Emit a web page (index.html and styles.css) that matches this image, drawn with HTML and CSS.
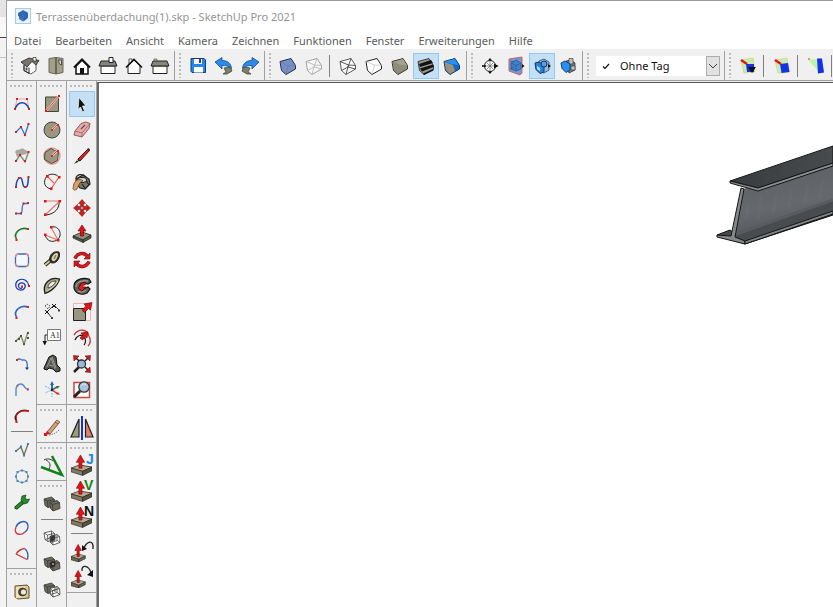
FILE: index.html
```html
<!DOCTYPE html>
<html lang="de">
<head>
  <meta charset="UTF-8" />
  <meta name="viewport" content="width=device-width, initial-scale=1.0"/>
  <title>Terrassenüberdachung(1).skp - SketchUp Pro 2021</title>
  <link rel="stylesheet" href="styles.css">
</head>
<body>

<!-- Shared shapes -->
<svg class="shapes" aria-hidden="true">
  <symbol id="cube" viewBox="0 0 20 20">
    <path d="M2 5.500 13 2.500 17.500 9.500V13L8 18.500 3.500 14.500Z"/>
  </symbol>
  <symbol id="slab" viewBox="0 0 20 20">
    <path d="M0 12.500 8 9.500 20 11.500 11 15.500Z" fill="#b8a98a" stroke="#222" stroke-width=".7"/>
    <path d="M0 12.500 11 15.500V19.500L0 16Z" fill="#857a60" stroke="#222" stroke-width=".6"/>
    <path d="M11 15.500 20 11.500V15L11 19.500Z" fill="#57513f" stroke="#222" stroke-width=".6"/>
    <path d="M7.500 12.500V7H5L9 0 13 7H10.500V12.500Z" fill="#e01418" stroke="#600" stroke-width=".5"/>
  </symbol>
  <symbol id="small-slab" viewBox="0 0 20 20">
    <path d="M0 15 6 12.500 13 14.500 7 17.500Z" fill="#b1a78c" stroke="#222" stroke-width=".5"/>
    <path d="M0 15 7 17.500V20L0 18ZM7 17.500 13 14.500V17L7 20Z" fill="#6b6453" stroke="#222" stroke-width=".5"/>
    <path d="M5.500 15V9.500H3.500L6.500 4 9.500 9.500H7.500V15Z" fill="#e01418" stroke="#600" stroke-width=".5"/>
  </symbol>
  <symbol id="back-box" viewBox="0 0 20 20">
    <path d="M2 5 9.500 3 12.500 5.500 13 11.500 6 13.500 3 11.500Z"/>
    <path d="M2 5 5.500 7 12.500 5.500M5.500 7 6 13.500" fill="none"/>
  </symbol>
  <symbol id="front-box" viewBox="0 0 20 20">
    <path d="M8 8.500 15 6.500 17.500 8.500 18 14.500 11 17 8.500 14.500Z"/>
    <path d="M8 8.500 10.500 10.500 17.500 8.500M10.500 10.500 11 17" fill="none"/>
  </symbol>
</svg>

<div class="desktop">
  <div class="behind"><span></span><span></span><span></span></div>

  <div class="window">
    <header class="titlebar">
      <svg class="logo" viewBox="0 0 16 16"><rect x=".5" y=".5" width="15" height="15" fill="#e9f3fc" stroke="#a9cbea"/><path d="M3 5 8 2l5 2.500V10L8.500 13.500 7 13l-3-2V8.500L3 8Z" fill="#3f78c4"/><path d="M3.500 6 8 3.800l4 2.200v3.500L9 12M4 8l4-2 2 1.200V9.500L8 11M5 9.800 8 8.300" fill="none" stroke="#1b4c93" stroke-width=".8"/></svg>
      <h1>Terrassenüberdachung(1).skp - SketchUp Pro 2021</h1>
    </header>

    <nav class="menu">
      <button>Datei</button>
      <button>Bearbeiten</button>
      <button>Ansicht</button>
      <button>Kamera</button>
      <button>Zeichnen</button>
      <button>Funktionen</button>
      <button>Fenster</button>
      <button>Erweiterungen</button>
      <button>Hilfe</button>
    </nav>

    <div class="toolbar">
      <!-- Ansichten -->
      <div class="group">
        <button class="tool" aria-label="Iso"><svg viewBox="0 0 20 20"><path d="M4 9v5.500l7 3.500 5-3.500V8l-3-3Z" fill="#fff" stroke="#333" stroke-width=".8"/><path d="M1 6 9 2l10 2.500-3 4.500-4-3.500-5 5.500Z" fill="#77756b" stroke="#222" stroke-width=".8"/><path d="M4 9.500v5l5 3v-6" fill="none" stroke="#222"/><path d="M5.500 11.500h2v3h-2Z" fill="#555"/><path d="M13 1.500h3v4l-3-1Z" fill="#fff" stroke="#222" stroke-width=".7"/></svg></button>
        <button class="tool" aria-label="Oben"><svg viewBox="0 0 20 20"><path d="M3 2.500 10 1.500v16.500l-7-1.500ZM10 1.500l7 1v14L10 18Z" fill="#a3a087" stroke="#6b695b"/><path d="M10 2v16" stroke="#5b594b"/><path d="M12.500 4h3v5l-2-1Z" fill="#ddd" stroke="#333" stroke-width=".8"/></svg></button>
        <button class="tool" aria-label="Vorne"><svg viewBox="0 0 20 20"><path d="m4 10 6-6 6 6v8H4Z" fill="#fff" stroke="#111" stroke-width="1.500"/><path d="m2 11.500 8-8 8 8" fill="none" stroke="#111" stroke-width="2"/><path d="M8 12h4v6H8Z" fill="#111"/></svg></button>
        <button class="tool" aria-label="Rechts"><svg viewBox="0 0 20 20"><path d="M3 10h14v7.500H3Z" fill="#fff" stroke="#222"/><path d="M3 5h14l2 5H1Z" fill="#88857b" stroke="#222"/><path d="M11 1.500h4v5h-4Z" fill="#fff" stroke="#222"/></svg></button>
        <button class="tool" aria-label="Hinten"><svg viewBox="0 0 20 20"><path d="M5 9V3h3v3" fill="#fff" stroke="#555"/><path d="m4 10 6-6 6 6v7.500H4Z" fill="#fff" stroke="#222"/><path d="m2 11.500 8-8 8 8" fill="none" stroke="#111" stroke-width="1.600"/></svg></button>
        <button class="tool" aria-label="Links"><svg viewBox="0 0 20 20"><path d="M3 10h14v7.500H3Z" fill="#fff" stroke="#222"/><path d="M3 5h14l2 5H1Z" fill="#88857b" stroke="#222"/><path d="M4 3h3v2H4Z" fill="#bbb" stroke="#444" stroke-width=".6"/></svg></button>
      </div>

      <!-- Datei -->
      <div class="group">
        <button class="tool" aria-label="Speichern"><svg viewBox="0 0 20 20"><path d="M3 2.500h13l1.500 1.500v12.500H4L3 15.500Z" fill="#2387ec" stroke="#123c73"/><path d="M6 3h8v5H6Z" fill="#f4f4f4"/><path d="M11 3h2v4h-2Z" fill="#35485f"/><path d="M6 11h9v5.500H6Z" fill="#fff"/></svg></button>
        <button class="tool" aria-label="Rückgängig"><svg viewBox="0 0 20 20"><path d="m10 12 6-1 2 4-5 3H9l3-2Z" fill="#7c806a" stroke="#333" stroke-width=".7"/><path d="m1 6 7-4.500v3c6 0 9 3 9.500 8-3-2.500-5.500-3-9.500-3V13Z" fill="#2b8bea" stroke="#174a86" stroke-width=".8"/></svg></button>
        <button class="tool" aria-label="Wiederholen"><svg viewBox="0 0 20 20"><path d="m10 12-6-1-2 4 5 3h4l-3-2Z" fill="#7c806a" stroke="#333" stroke-width=".7"/><path d="m19 6-7-4.500v3c-6 0-9 3-9.500 8 3-2.500 5.500-3 9.500-3V13Z" fill="#2b8bea" stroke="#174a86" stroke-width=".8"/></svg></button>
      </div>

      <!-- Stile -->
      <div class="group">
        <button class="tool" aria-label="Röntgen"><svg viewBox="0 0 20 20" fill="#7690c4" stroke="#25304a"><use href="#cube"/><path d="m3 6 7 4 7-1M10 10l-2 8" fill="none" stroke="#6179aa" stroke-width=".7"/></svg></button>
        <button class="tool" aria-label="Hintere Kanten"><svg viewBox="0 0 20 20" fill="#f7f7f7" stroke="#999" stroke-width=".9"><use href="#cube"/><path d="m2 5.500 8.500 3.500 7 .5M10.500 9 8 18.500M13 2.500l-3 8.500-6.500 3.500M10 11l7.500 2" fill="none" stroke="#bbb"/></svg></button>
        <span class="divider"></span>
        <button class="tool" aria-label="Drahtgitter"><svg viewBox="0 0 20 20" fill="#fafafa" stroke="#333" stroke-width=".8"><use href="#cube"/><path d="m2 5.500 8.500 3.500 7 .5M10.500 9 8 18.500M13 2.500l-3 8.500-6.500 3.500M10 11l7.500 2" fill="none"/></svg></button>
        <button class="tool" aria-label="Verdeckte Linie"><svg viewBox="0 0 20 20" fill="#fff" stroke="#222"><use href="#cube"/><path d="m2 5.500 8.500 3.500 7 .5M10.500 9 8 18.500" fill="none" stroke="#bbb" stroke-width=".7"/></svg></button>
        <button class="tool" aria-label="Schattiert"><svg viewBox="0 0 20 20" fill="#8e8c7b" stroke="#3a392f"><use href="#cube"/><path d="m3 6 10-3 4 6.500-6-.5Z" fill="#a3a190" stroke="none"/><path d="m11 9-3 9-4-4L2.500 6Z" fill="#8f8d79" stroke="none"/></svg></button>
        <button class="tool active" aria-label="Schattiert mit Texturen"><svg viewBox="0 0 20 20" fill="#99978a" stroke="#222" stroke-width=".8"><use href="#cube"/><path d="m3 8 12-4 2 3-13 4ZM4 12.500l13-4 .5 2.500L6 15.500ZM7 17.500l10.500-4.500v1.500L8 19Z" fill="#111" stroke="none"/></svg></button>
        <button class="tool" aria-label="Monochrom"><svg viewBox="0 0 20 20" fill="#1766c9" stroke="#17345d"><use href="#cube"/><path d="m2.500 5.500 10.500-2.500 3.500 6-7-1Z" fill="#2692f4" stroke="none"/><path d="m2.500 6 8.500 3 2 6-5 3-4-4Z" fill="#99937b" stroke="none"/></svg></button>
      </div>

      <!-- Schnitt -->
      <div class="group">
        <button class="tool" aria-label="Schnittebene"><svg viewBox="0 0 20 20"><circle cx="10" cy="10" r="5.500" fill="#fff" stroke="#222"/><path d="M2 10h16M10 4.500v11M7 7l6 6M13 7l-6 6" stroke="#666" stroke-width=".7"/><path d="M10 2 8 4.500h4ZM18.500 10 14 7.500v5ZM10 18l-2-2.500h4ZM2 9.300h4v1.400H2Z" fill="#111"/></svg></button>
        <button class="tool" aria-label="Schnittebenen anzeigen"><svg viewBox="0 0 20 20"><path d="m3 3 13-2v16l-2 2L3 15Z" fill="#6a9cda" stroke="#d5605f"/><path d="m5 7 5-3 5 3v6l-5 2-5-2Z" fill="#3f82ca" stroke="#2a5792" stroke-width=".8"/><path d="m5 7 5 2.500L15 7M10 9.500V15M4 5l4 1M4 13l4-2" fill="none" stroke="#2a5792" stroke-width=".7"/><path d="m16 8 2.500 2L16 12Z" fill="#111"/></svg></button>
        <button class="tool active" aria-label="Schnitte anzeigen"><svg viewBox="0 0 20 20"><path d="m7 5 5-2 5 3v8l-5 3-5-3Z" fill="#94b9df" stroke="#24466f" stroke-width=".8"/><path d="m3 7 4-1 5 3v7l-4 1.500-4-4Z" fill="#2683e0" stroke="#17345d"/><circle cx="12" cy="8" r="3" fill="#5a9fe3" stroke="#17345d"/><path d="m5 10 3 2v3l-3-2Z" fill="#c0daf0"/><path d="m16 8 3 2-3 2Z" fill="#111"/></svg></button>
        <button class="tool" aria-label="Schnittfüllung"><svg viewBox="0 0 20 20"><path d="m8 5 5-1 4 3v7l-6 3Z" fill="#777872" stroke="#333" stroke-width=".8"/><path d="M11 2.500h4V8h-4ZM13 10h4v4h-4Z" fill="#c1c2bd" stroke="#444" stroke-width=".7"/><path d="m3 7 4-2 5 3v6l-4 2.500-4-4Z" fill="#2490ef" stroke="#174379"/></svg></button>
      </div>

      <!-- Tags -->
      <div class="group">
        <div class="tag-picker">
          <svg class="check" viewBox="0 0 10 10"><path d="m2 5.500 2 2 4-4.500" fill="none" stroke="#111" stroke-width="1.200"/></svg>
          <select aria-label="Tag"><option>Ohne Tag</option></select>
          <span class="arrow"><svg viewBox="0 0 10 10"><path d="m1 3 4 4 4-4" fill="none" stroke="#444"/></svg></span>
        </div>
      </div>

      <!-- Texturen -->
      <div class="group last">
        <button class="tool" aria-label="Textur auswählen"><svg viewBox="0 0 20 20"><path d="M3 4 15 2l2 14-11 1Z" fill="#c7eeb0" stroke="#d3d08e" stroke-width=".8"/><path d="M8 8h8v8H9Z" fill="#1332e4"/><path d="m3 4 6 4" stroke="#dd1b18" stroke-width="2.500"/><path d="M10 11h8l-4 6Z" fill="#111"/></svg></button>
        <span class="divider"></span>
        <button class="tool" aria-label="Textur ausrichten"><svg viewBox="0 0 20 20"><path d="M3 4 15 2l2 14-11 1Z" fill="#c7eeb0" stroke="#d3d08e" stroke-width=".8"/><path d="m8 8 8-1 1.500 9-8 1Z" fill="#1332e4"/><path d="m3 4 6 4" stroke="#dd1b18" stroke-width="2.500"/></svg></button>
        <span class="divider"></span>
        <button class="tool" aria-label="Textur skalieren"><svg viewBox="0 0 20 20"><path d="M2 3.500h10l2 14Z" fill="#bff3a9"/><path d="M11 2.500h5l2 14-6 1Z" fill="#1332e4"/><path d="M2 3h2" stroke="#d82" stroke-width="1.500"/></svg></button>
        <span class="divider"></span>
      </div>
    </div>

    <main class="workspace">
      <!-- Bézier -->
      <div class="palette">
        <div class="stack">
          <button class="tool" aria-label="Bézierkurve"><svg viewBox="0 0 20 20"><path d="M3 15 5 5h10l2 10" fill="none" stroke="#eea6a0"/><path d="M3 15C6 6.500 14 6.500 17 15" fill="none" stroke="#173fb0" stroke-width="1.500"/><path d="M4 4h2v2H4ZM14 4h2v2h-2ZM2 14h2v2H2ZM16 14h2v2h-2Z" fill="#d71d1d"/></svg></button>
          <button class="tool" aria-label="Polylinie"><svg viewBox="0 0 20 20"><path d="m4 12 5-5 4 8 3.500-11" fill="none" stroke="#426fc5" stroke-width="1.300"/><path d="M3 11h2v2H3ZM8 6h2v2H8ZM12 14h2v2h-2ZM15.500 3h2v2h-2Z" fill="#d71d1d"/></svg></button>
          <button class="tool" aria-label="Polylinie teilen"><svg viewBox="0 0 20 20"><path d="M4 8c-2-3 1-5 3-4 2-2 5-2 6 0 3 0 4 3 1 4l-4 1-5 2Z" fill="#aaa79f"/><path d="m4 15 4-6 5 7 3.500-10" fill="none" stroke="#8a8e78" stroke-width="1.500"/><path d="M3 14h2v2H3ZM7 8h2v2H7ZM12 14h2v2h-2ZM15.500 5h2v2h-2Z" fill="#c22"/></svg></button>
          <button class="tool" aria-label="Spline"><svg viewBox="0 0 20 20"><path d="M4 15c0-5 2-10 5-9 2 1 1 9 4 9 3 1 3-5 3.500-10" fill="none" stroke="#1e43bb" stroke-width="1.500"/><path d="M3 14h2v2H3ZM6 5h2v2H6ZM12 14h2v2h-2ZM15.500 4h2v2h-2Z" fill="#d71d1d"/></svg></button>
          <button class="tool" aria-label="Kubische Kurve"><svg viewBox="0 0 20 20"><path d="M4 15.500h5c2 0 0-9 3-10h4" fill="none" stroke="#3f70c4" stroke-width="1.300"/><path d="M3 14.500h2v2H3ZM8 14.500h2v2H8ZM10.500 4.500h2v2h-2ZM15 4h2v2h-2Z" fill="#c22"/></svg></button>
          <button class="tool" aria-label="Grüner Bogen"><svg viewBox="0 0 20 20"><path d="M4.500 15C1 9 8 2.500 16 5" fill="none" stroke="#237c2c" stroke-width="1.600"/><path d="M3.500 15h2v2h-2ZM15 4h2v2h-2Z" fill="#d71d1d"/></svg></button>
          <button class="tool" aria-label="Rundes Rechteck"><svg viewBox="0 0 20 20"><rect x="3.500" y="4" width="13" height="12.500" rx="3" fill="#f5f7fc" stroke="#3f68bd" stroke-width="1.300"/><path d="M3.500 7q0-3 3-3M13.500 4q3 0 3 3M16.500 13.500q0 3-3 3M6.500 16.500q-3 0-3-3" fill="none" stroke="#dc918a" stroke-width="1.300"/></svg></button>
          <button class="tool" aria-label="Spirale"><svg viewBox="0 0 20 20"><path d="M10 10.500c1.500 2-3 3-3.500 0C6 7 10 6 12 7.500c3 3 0 7-4 6.500-5-1-5.500-7-2-9.500 5-3 10 0 10.500 5" fill="none" stroke="#1838b6" stroke-width="1.200"/><path d="M9 9.500h2v2H9ZM16 9h2v2h-2Z" fill="#d71d1d"/></svg></button>
          <button class="tool" aria-label="Blauer Bogen"><svg viewBox="0 0 20 20"><path d="M4.500 15C1 9 8 2.500 16 5" fill="none" stroke="#3163c2" stroke-width="1.600"/><path d="M3.500 15h2v2h-2ZM15 4h2v2h-2Z" fill="#d71d1d"/></svg></button>
          <button class="tool" aria-label="Linienzug"><svg viewBox="0 0 20 20"><path d="m4 13 5-5 3 8 4-12" fill="none" stroke="#879071" stroke-width="1.500"/><path d="M3 12h2v2H3ZM8 7h2v2H8ZM11 15h2v2h-2ZM15 4h2v2h-2ZM15 9h2v2h-2ZM6 10h2v2H6Z" fill="#505b32"/></svg></button>
          <button class="tool" aria-label="Kurve nach rechts"><svg viewBox="0 0 20 20"><path d="M5 6c3-3 4 1 6 0 4-1 5 4 4 9" fill="none" stroke="#4270bd" stroke-width="1.300"/><path d="M4 5h2v2H4Z" fill="#d23"/><path d="M13 13.500h4L15 16Z" fill="#173fb0"/></svg></button>
          <button class="tool" aria-label="Bogen nach rechts"><svg viewBox="0 0 20 20"><path d="M4 16V10C4 3 10 3 12 6c1 2 2 3 4 3" fill="none" stroke="#5d88c9" stroke-width="1.400"/><path d="M15 8.500h2v2h-2ZM5 5h1.500v1.500H5Z" fill="#b64b65"/></svg></button>
          <button class="tool" aria-label="Roter Bogen"><svg viewBox="0 0 20 20"><path d="M4.500 15C1 9 8 2.500 16 5" fill="none" stroke="#501818" stroke-width="1.800"/><path d="M4.500 13C3 8 9 4 15 5" fill="none" stroke="#e22" stroke-width="1"/><path d="M3.500 15h2v2h-2ZM15 4h2v2h-2Z" fill="#e11"/></svg></button>
          <span class="rule"></span>
          <button class="tool" aria-label="Punkte bearbeiten"><svg viewBox="0 0 20 20"><path d="m4 11 5-4 3 8 4-11" fill="none" stroke="#68705a" stroke-width="1.300"/><path d="M3 10h2v2H3ZM8 5.500h2v2H8ZM11 14.500h2v2h-2ZM15 3h2v2h-2Z" fill="#3a7bbd"/></svg></button>
          <button class="tool" aria-label="Kreispunkte"><svg viewBox="0 0 20 20"><circle cx="10" cy="10.500" r="6" fill="none" stroke="#7b817f"/><path d="M9 3.500h2v2H9ZM9 15.500h2v2H9ZM3 9.500h2v2H3ZM15 9.500h2v2h-2ZM4.500 5h2v2h-2ZM13.500 5h2v2h-2ZM4.500 14h2v2h-2ZM13.500 14h2v2h-2Z" fill="#3c86c8"/></svg></button>
          <button class="tool" aria-label="Einstellungen"><svg viewBox="0 0 20 20"><path d="m4.500 15.500 7-6" stroke="#153f19" stroke-width="4" stroke-linecap="round"/><path d="m4.500 15.500 8-7" stroke="#248b2a" stroke-width="2.500" stroke-linecap="round"/><path d="m9 8 1-4 4-1-1 3 2 1.500 2.500-.5-2 4-4 1Z" fill="#248b2a" stroke="#153f19" stroke-width=".7"/></svg></button>
          <button class="tool" aria-label="Offene Kurve"><svg viewBox="0 0 20 20" fill="none" stroke-width="1.400"><path d="M4 9C1 17 9 18 13 14" stroke="#d83b3b"/><path d="M4 9c2-5 8-7 11-4 2 3 1 7-2 9" stroke="#315bb5"/></svg></button>
          <button class="tool" aria-label="Kurve schließen"><svg viewBox="0 0 20 20" fill="none" stroke-width="1.300"><path d="m4 10 11 5.500" stroke="#d33"/><path d="M15.500 15.500c1-5 0-9-3-11" stroke="#315bb5"/><path d="M12.500 4.500C9 5 6 7 4 10" stroke="#c33"/></svg></button>
        </div>
        <div class="stack open">
          <button class="tool" aria-label="Loch"><svg viewBox="0 0 20 20"><path d="m3 4 12-1 2 2v11l-11 1-3-2Z" fill="#dac88e" stroke="#5f5334"/><path d="m4 5 9-.5V15L4 16Z" fill="#f0e2b1"/><circle cx="10.500" cy="10" r="4" fill="#4c4a42" stroke="#222" stroke-width=".7"/><circle cx="11.500" cy="10" r="2.600" fill="#eee9d6"/></svg></button>
        </div>
      </div>

      <!-- Zeichnen und Konstruktion -->
      <div class="palette">
        <div class="stack">
          <button class="tool" aria-label="Rechteck"><svg viewBox="0 0 20 20"><path d="M3.500 3h13v14.500h-13Z" fill="#99977f" stroke="#45443a"/><path d="M4 17 17 2" stroke="#f2c0b7" stroke-width="2"/><path d="M4 17 17 2" stroke="#d33" stroke-width=".8"/><path d="M3 16h2v2H3ZM16 1h2v2h-2Z" fill="#e11"/></svg></button>
          <button class="tool" aria-label="Kreis"><svg viewBox="0 0 20 20"><circle cx="10" cy="10" r="8" fill="#99977f" stroke="#45443a"/><path d="m10 10 6-6" stroke="#f3c4bc" stroke-width="2"/><path d="m10 10 6-6" stroke="#c33" stroke-width=".8"/><path d="M9 9h2v2H9ZM15 4h2v2h-2Z" fill="#d22"/></svg></button>
          <button class="tool" aria-label="Polygon"><svg viewBox="0 0 20 20"><circle cx="10" cy="10" r="8" fill="none" stroke="#e99991" stroke-width="1.500"/><path d="m9 2.500 7.500 4-1 8-6 3-7-4 .5-7Z" fill="#99977f" stroke="#4d493f"/><path d="m10 10 6-6" stroke="#f3c4bc" stroke-width="2"/><path d="m10 10 6-6" stroke="#c33" stroke-width=".8"/><path d="M9 9h2v2H9ZM15 4h2v2h-2Z" fill="#d22"/></svg></button>
          <button class="tool" aria-label="Bogen"><svg viewBox="0 0 20 20"><path d="M5 4c4-3 9-2 12 1M5 4c-5 6-2 12 4 13" fill="none" stroke="#222"/><path d="m5 4 7 7M17 5 9 17" stroke="#dd6358" stroke-width="1.200"/><path d="M4 3h2.500v2.500H4ZM16 4h2.500v2.500H16ZM8 15.500h2.500V18H8Z" fill="#e11"/></svg></button>
          <button class="tool" aria-label="2-Punkt-Bogen"><svg viewBox="0 0 20 20"><path d="M17 3c1 7-4 13-13 14" fill="none" stroke="#222"/><path d="M3 3h15L3 17" fill="none" stroke="#dd7b70" stroke-width="1.200"/><path d="M2 2h2.500v2.500H2ZM16.500 2H19v2.500h-2.500ZM2 15.500h2.500V18H2Z" fill="#e11"/></svg></button>
          <button class="tool" aria-label="3-Punkt-Bogen"><svg viewBox="0 0 20 20"><path d="M9 3c9-2 12 9 6 13-5 3-10 1-12-5" fill="none" stroke="#222"/><path d="m9 3 7 13-13-5" fill="none" stroke="#dd7b70" stroke-width="1.200"/><path d="M8 2h2.500v2.500H8ZM15 15h2.500v2.500H15ZM2 9.500h2.500V12H2Z" fill="#e11"/></svg></button>
          <button class="tool" aria-label="Maßband"><svg viewBox="0 0 20 20"><path d="m3 15 6-5" stroke="#222" stroke-width="4"/><path d="m3 15 6-5" stroke="#d4ca83" stroke-width="2"/><path d="M8 7c1-4 5-6 9-5 2 5-2 11-6 11-3 0-4-3-3-6Z" fill="#333127" stroke="#222"/><path d="M10 7c2-4 5-5 6-3 0 4-3 8-5 7-1 0-2-2-1-4Z" fill="#ddd6ad"/><path d="m12 9 2-4" stroke="#77715a" stroke-width="1.200"/></svg></button>
          <button class="tool" aria-label="Winkelmesser"><svg viewBox="0 0 20 20"><path d="M3 17.500C0 8 8 0 17.500 3 17 7 11 15 3 17.500Z" fill="#aaa982" stroke="#222" stroke-width="1.300"/><path d="M6 12c0-4 3-7 8-7-1 3-4 6-8 7Z" fill="#f2f2ed" stroke="#333" stroke-width=".8"/><path d="M5 15c5-2 9-6 11-10" fill="none" stroke="#dddcb2"/></svg></button>
          <button class="tool" aria-label="Abmessung"><svg viewBox="0 0 20 20"><path d="m5 10 7-7 5 5M5 10l5 6" fill="none" stroke="#444"/><path d="m3 8 4 4M7 8l-4 4M10 2l4 4M14 2l-4 4" stroke="#111"/><path d="M16 7.500h2v2h-2ZM9 15h2v2H9Z" fill="#334b34"/><path d="m3 4 2-2 3 2-2 3Z" fill="none" stroke="#555" stroke-dasharray="1.500 1"/></svg></button>
          <button class="tool" aria-label="Text"><svg viewBox="0 0 20 20"><path d="M5.500 1.500h13v11h-13Z" fill="#fff" stroke="#777"/><text x="8" y="10" class="label">A1</text><path d="M5 7H3v7" fill="none" stroke="#222"/><path d="M.500 13H5l-2.200 4.500Z" fill="#111"/></svg></button>
          <button class="tool" aria-label="3D-Text"><svg viewBox="0 0 20 20"><path d="M2 14 7 3l4-2 3 2 1 8 3 3v3l-4 1-3-3-4-1-2 2-3-1Z" fill="#56564f" stroke="#111"/><path d="m5 13 4-9 4 11M7 11l4 1M10 3l4 11" fill="none" stroke="#aaa" stroke-width=".8"/></svg></button>
          <button class="tool" aria-label="Achsen"><svg viewBox="0 0 20 20"><path d="M10 10V3" stroke="#246bc0" stroke-width="2"/><path d="M8 5h4l-2-4Z" fill="#246bc0"/><path d="m10 10 5-3" stroke="#536c49" stroke-width="1.500"/><path d="m14 6 4 0-3 3Z" fill="#536c49"/><path d="m10 10 6 4" stroke="#d42b28" stroke-width="1.500"/><path d="m14 14 4 1-2-3Z" fill="#d42b28"/><path d="m3 6 7 4-7 3M10 10v7" fill="none" stroke="#7eaad5" stroke-dasharray="2 1"/><path d="M9 9h2v2H9Z" fill="#222"/></svg></button>
        </div>
        <div class="stack">
          <button class="tool" aria-label="Freihand"><svg viewBox="0 0 20 20"><path d="m5 14 9-11 3 2-9 11Z" fill="#d3a273" stroke="#5e4631" stroke-width=".8"/><path d="m13 4 2-2 3 2-2 2Z" fill="#e8a294" stroke="#5e4631" stroke-width=".7"/><path d="m3 17 2-4 3 3Z" fill="#d11"/><path d="M7 17c5-1 7-2 10-5" fill="none" stroke="#777" stroke-dasharray="1.500 1"/><path d="M2 15h3v3H2Z" fill="#e11"/></svg></button>
        </div>
        <div class="stack">
          <button class="tool" aria-label="Winkel"><svg class="large" viewBox="0 0 24 24"><path d="m12 2 10 19L1 13" fill="none" stroke="#158019" stroke-width="2.500"/><path d="M4 6c3-2 7-1 9 1M6 6c4 2 5 5 3 9" fill="none" stroke="#333"/></svg></button>
        </div>
        <div class="stack open">
          <button class="tool" aria-label="Äußere Schale"><svg viewBox="0 0 20 20" fill="#6b6b62" stroke="#383832" stroke-width=".8"><use href="#back-box"/><use href="#front-box"/></svg></button>
          <span class="rule"></span>
          <button class="tool" aria-label="Schnittmenge"><svg viewBox="0 0 20 20" fill="#fff" stroke="#444" stroke-width=".8"><use href="#back-box"/><use href="#front-box"/><path d="m8 8.500 5-1.500v5l-4.500 2Z" fill="#333"/><path d="m3 11.500 7-2 3 2M9.500 3v6M8.500 14.500l7-2 2.500 2M15 6.500v6" fill="none"/></svg></button>
          <button class="tool" aria-label="Vereinigen"><svg viewBox="0 0 20 20" fill="#6b6b62" stroke="#383832" stroke-width=".8"><use href="#back-box"/><use href="#front-box"/><path d="m8 8.500 5-1.500v5l-4.500 2Z" fill="#292925"/><path d="M10 9h2v2h-2Z" fill="#888" stroke="none"/></svg></button>
          <button class="tool" aria-label="Abziehen"><svg viewBox="0 0 20 20" fill="#6b6b62" stroke="#383832" stroke-width=".8"><use href="#back-box"/><use href="#front-box" fill="#fff"/><path d="m8.500 14.500 6.500-2 3 2M15 6.500v6M8 11.500l5-1.500M13 7v5" fill="none"/></svg></button>
        </div>
      </div>

      <!-- Bearbeiten -->
      <div class="palette">
        <div class="stack">
          <button class="tool active" aria-label="Auswählen"><svg viewBox="0 0 20 20"><path d="m7 3.500 7 8.500h-3.500l2 5-2 1-2-5L6 15.500Z" fill="#111" stroke="#fff" stroke-width=".7"/></svg></button>
          <button class="tool" aria-label="Radiergummi"><svg viewBox="0 0 20 20"><path d="M9 3.500 14 2l4 1.500-1 5L10 17l-8-2 1-4Z" fill="#eca7a8" stroke="#69464a" stroke-width=".8"/><path d="m3 11 7 2 8-9.500M10 13v4" fill="none" stroke="#9d6065" stroke-width=".8"/><path d="m9 9 4-4" stroke="#555" stroke-width="1.300"/></svg></button>
          <button class="tool" aria-label="Linie"><svg viewBox="0 0 20 20"><path d="M6 13 16 3l1.500 1.500L8 15Z" fill="#d81f24" stroke="#5b1517"/><path d="m15 3 2-1 1 2-1 1.500Z" fill="#333"/><path d="m2 18 4-5 2 2Z" fill="#222"/><path d="m5 14 2 2" stroke="#c7b88c"/></svg></button>
          <button class="tool" aria-label="Farbeimer"><svg viewBox="0 0 20 20"><path d="m4 7 7-4 6 4 1 5-5 5-5-1-4-5Z" fill="#77756a" stroke="#222" stroke-width="1.200"/><path d="M4 7c0-5 7-6 10-2M13 7l4 6M10 12l3 4" fill="none" stroke="#222" stroke-width="1.200"/><ellipse cx="10" cy="8" rx="4.500" ry="2.500" fill="#d4d1c1" stroke="#222"/><path d="M3 10c2-3 6-3 8-1-4 1-4 4-6 8-2 2-4 1-4-1 1-2 0-4 2-6Z" fill="#d9a067" stroke="#574532" stroke-width=".8"/></svg></button>
          <button class="tool" aria-label="Verschieben"><svg viewBox="0 0 20 20" fill="#d9171b" stroke="#6e1011" stroke-width=".5"><path d="m10 1.500 3.500 4h-2v3h-3v-3h-2ZM10 18.500l3.500-4h-2v-3h-3v3h-2ZM1.500 10l4-3.500v2h3v3h-3v2ZM18.500 10l-4-3.500v2h-3v3h3v2Z"/><path d="M9 9h2v2H9Z" fill="#fff"/></svg></button>
          <button class="tool" aria-label="Drücken/Ziehen"><svg viewBox="0 0 20 20"><path d="m1 12 9-4 9 3-8 5Z" fill="#928e77" stroke="#222" stroke-width=".8"/><path d="m1 12 10 4v2.500L1 14ZM11 16l8-5v3l-8 4.500Z" fill="#5d5a4b" stroke="#222" stroke-width=".7"/><path d="M8.500 12V7H6l4-6 4 6h-2.500v5Z" fill="#e01418" stroke="#600" stroke-width=".6"/></svg></button>
          <button class="tool" aria-label="Drehen"><svg viewBox="0 0 20 20" fill="none"><path d="M3 8.500C5 3 12 2 15 6M17 11.500C15 17 8 18 5 14" stroke="#611" stroke-width="3.400"/><path d="M3 8.500C5 3 12 2 15 6M17 11.500C15 17 8 18 5 14" stroke="#e2171b" stroke-width="2.400"/><path d="m18 3 0 6h-6ZM2 17v-6h6Z" fill="#e2171b" stroke="#611" stroke-width=".6"/></svg></button>
          <button class="tool" aria-label="Folge mir"><svg viewBox="0 0 20 20"><path d="M2 12C1 5 8 1 17 3l2 3-3 2-4-1c-5 0-5 5-1 6l5-2 2 2-3 4c-6 3-12 0-13-5Z" fill="#62605a" stroke="#111" stroke-width="1.200"/><path d="M4 11c0-5 6-7 12-6M6 15c3 2 6 1 8-1" fill="none" stroke="#b4ae9f"/><path d="M8 10c0-3 3-4 6-3L13 9c-2 0-3 1-2 2h3l-4 4-4-3Z" fill="#e11b1e" stroke="#500" stroke-width=".7"/></svg></button>
          <button class="tool" aria-label="Skalieren"><svg viewBox="0 0 20 20"><path d="M1.500 1.500h17v17h-17Z" fill="none" stroke="#edb5ac"/><path d="M1.500 6.500h12v12h-12Z" fill="#99977f" stroke="#222"/><path d="m10 8 4-4-2-2 8-1.500L18.500 8l-2-1.500-4 4Z" fill="#e01418" stroke="#500" stroke-width=".6"/></svg></button>
          <button class="tool" aria-label="Versatz"><svg viewBox="0 0 20 20" fill="none" stroke-width="1.300"><path d="M2 7C7 0 15 1 17 8c2 4 1 8-1 10" stroke="#c33"/><path d="M3 12c2-5 7-6 9-3 2 2 2 6 0 8" stroke="#222"/><path d="m8 10 3-3-2-2 7-1-1 6-1.500-1-3 3Z" fill="#e01418" stroke="#500" stroke-width=".6"/></svg></button>
          <button class="tool" aria-label="Zoom Grenzen"><svg viewBox="0 0 20 20"><path d="m7 13-5 5" stroke="#222" stroke-width="2.500"/><circle cx="9.500" cy="10" r="4" fill="#9bbadb" stroke="#333" stroke-width="1.300"/><path d="m4 4 3 3M16 4l-3 3M16 16l-3-3" stroke="#222" stroke-width="1.500"/><path d="M1.500 1.500 7 2 2 7ZM18.500 1.500 13 2l5 5ZM18.500 18.500 13 18l5-5Z" fill="#d8191c" stroke="#500" stroke-width=".5"/></svg></button>
          <button class="tool" aria-label="Zoomfenster"><svg viewBox="0 0 20 20"><path d="M2 2.500h15.500v15H2Z" fill="#fff" stroke="#cc4942" stroke-width="1.500"/><path d="m8 11-6 6" stroke="#222" stroke-width="3"/><circle cx="12" cy="7" r="5.200" fill="#a9c4df" stroke="#333" stroke-width="1.300"/><path d="M9 6c1-2 3-3 5-1" fill="none" stroke="#eaf4fc"/></svg></button>
        </div>
        <div class="stack">
          <button class="tool" aria-label="Spiegeln"><svg class="large" viewBox="0 0 24 24"><path d="M9 3v18H1Z" fill="#9b9d78" stroke="#222" stroke-width="1.200"/><path d="M15.500 3v18H23Z" fill="#df806c" stroke="#222" stroke-width="1.200"/><path d="M12 0v24" stroke="#1531df" stroke-width="2"/></svg></button>
        </div>
        <div class="stack">
          <button class="tool" aria-label="Joint Push Pull"><svg class="large" viewBox="0 0 24 24"><use href="#slab" x="1" y="1" width="21" height="21"/><text x="16" y="10" class="letter blue">J</text></svg></button>
          <button class="tool" aria-label="Vector Push Pull"><svg class="large" viewBox="0 0 24 24"><use href="#slab" x="1" y="1" width="21" height="21"/><text x="14" y="10" class="letter green">V</text></svg></button>
          <button class="tool" aria-label="Normal Push Pull"><svg class="large" viewBox="0 0 24 24"><use href="#slab" x="1" y="1" width="21" height="21"/><text x="14" y="10" class="letter">N</text></svg></button>
          <span class="rule"></span>
          <button class="tool" aria-label="Zurück"><svg class="large" viewBox="0 0 24 24"><use href="#small-slab" x="1" y="0" width="22" height="22"/><path d="M23 9c1-10-6-8-9-1" fill="none" stroke="#222" stroke-width="1.300"/><path d="m12 5 0 6 5-2Z" fill="#111"/></svg></button>
          <button class="tool" aria-label="Wiederholung"><svg class="large" viewBox="0 0 24 24"><use href="#small-slab" x="1" y="0" width="22" height="22"/><path d="M12 5c-1-7 7-6 9 2" fill="none" stroke="#222" stroke-width="1.300"/><path d="m23 4 0 7-6-2Z" fill="#111"/></svg></button>
        </div>
      </div>

      <!-- Modell -->
      <div class="canvas">
        <svg class="beam" viewBox="0 0 120 104" role="img" aria-label="Stahlträger">
          <defs>
            <linearGradient id="web" x1="0" y1="0" x2=".25" y2="1">
              <stop offset="0" stop-color="#5b5f64"/>
              <stop offset=".65" stop-color="#65696e"/>
              <stop offset="1" stop-color="#55585c"/>
            </linearGradient>
            <linearGradient id="flange" x1="0" y1="0" x2="1" y2="0">
              <stop offset="0" stop-color="#393c3e"/>
              <stop offset="1" stop-color="#484b4e"/>
            </linearGradient>
          </defs>
          <path d="M4 92 17 87l15 11L120 61v11L32 101Z" fill="#44474a" stroke="#111"/>
          <path d="M30 46 120 20v41L22 95Z" fill="url(#web)"/>
          <path d="M22 93 120 58v10L32 99Z" fill="#494c4f"/>
          <path d="M23 91 120 57" stroke="#585b5f" stroke-width="3"/>
          <path d="M35 60l-2 17M48 53l-3 24M63 52l-3 19M78 45l-2 21M95 41l-3 18M110 36l-3 19" stroke="#7b7e82" stroke-width="3" opacity=".15"/>
          <path d="M28 45 31 46 22 94 32 98V101L4 94V92L18 93Z" fill="#85888a" stroke="#151515"/>
          <path d="M32 98 120 68v3L32 101Z" fill="#818486" stroke="#151515"/>
          <path d="M17 38 120 3v17L45 45Z" fill="url(#flange)" stroke="#151515"/>
          <path d="M17 38 45 45 120 20v3L45 48 17 40Z" fill="#898c8e" stroke="#151515"/>
        </svg>
      </div>
    </main>
  </div>
</div>

</body>
</html>
```
FILE: styles.css
```css
* { box-sizing: border-box; }

body {
  margin: 0;
  font-family: "Noto Sans", "Open Sans", sans-serif;
  font-size: 11px;
  background: #f0f0f0;
  color: #444;
}

button {
  border: none;
  background: none;
  padding: 0;
  font: inherit;
  color: inherit;
}

.shapes {
  display: none;
}

.desktop {
  display: flex;
  height: 100vh;
  overflow: hidden;
}

/* Sliver of the window underneath */
.behind {
  width: 6px;
  flex-shrink: 0;
  background: #f3f3f3;
}

.behind span {
  display: block;
  height: 20px;
  border-bottom: 1px solid #c4c4c4;
}

.behind span:first-child {
  height: 38px;
  border-bottom-color: #444;
  background: linear-gradient(#e4e4e4 17px, #f8f8f8 17px);
}

.behind span:last-child {
  border-bottom: none;
}

.window {
  flex: 1;
  min-width: 0;
  display: flex;
  flex-direction: column;
  border-top: 1px solid #999;
  border-left: 1px solid #a0a0a0;
  background: #fff;
}

.titlebar {
  display: flex;
  align-items: center;
  gap: 5px;
  height: 30px;
  padding-left: 8px;
  color: #949494;
}

.titlebar h1 {
  margin: 0;
  font-size: 11px;
  font-weight: normal;
}

.logo {
  width: 16px;
  height: 16px;
}

.menu {
  display: flex;
  gap: 14px;
  height: 18px;
  padding-left: 7px;
  color: #5c5c5c;
}

.toolbar {
  display: flex;
  height: 32px;
  padding-top: 2px;
  overflow: hidden;
  background: #f0f0f0;
  border-bottom: 1px solid #a0a0a0;
}

.group {
  position: relative;
  display: flex;
  align-items: center;
  flex-shrink: 0;
  padding: 0 1px 0 10px;
  border-right: 1px solid #a0a0a0;
}

.group.last {
  border-right: none;
}

/* Drag grips */
.group::before,
.stack::before {
  content: "";
  position: absolute;
}

.group::before {
  left: 4px;
  top: 2px;
  bottom: 2px;
  width: 2px;
  background: repeating-linear-gradient(#bcbcbc 0 2px, #f0f0f0 2px 4px);
}

.stack::before {
  top: 4px;
  left: 3px;
  right: 2px;
  height: 2px;
  background: repeating-linear-gradient(to right, #bcbcbc 0 2px, #f0f0f0 2px 4px);
}

.tool {
  display: flex;
  align-items: center;
  justify-content: center;
  width: 26px;
  height: 26px;
  flex-shrink: 0;
}

.tool svg {
  width: 20px;
  height: 20px;
  flex-shrink: 0;
  overflow: visible;
}

.tool svg.large {
  width: 24px;
  height: 24px;
}

.tool.active {
  background: #c4e0f6;
  border: 1px solid #90c8f6;
}

.divider {
  width: 1px;
  height: 22px;
  margin: 0 5px 0 2px;
  background: #808080;
}

.tag-picker {
  display: grid;
  grid-template-columns: 24px 1fr 14px;
  align-items: center;
  width: 124px;
  height: 20px;
  margin: 0 3px;
  background: #fff;
}

.tag-picker > * {
  grid-row: 1;
}

.tag-picker select {
  grid-column: 1 / -1;
  height: 20px;
  padding: 0 14px 0 24px;
  border: none;
  appearance: none;
  background: transparent;
  font: inherit;
  color: #111;
}

.check {
  grid-column: 1;
  width: 10px;
  height: 10px;
  margin-left: 5px;
}

.arrow {
  grid-column: 3;
  display: flex;
  align-items: center;
  justify-content: center;
  height: 20px;
  background: #e1e1e1;
  border: 1px solid #adadad;
  pointer-events: none;
}

.arrow svg {
  width: 10px;
  height: 10px;
  flex-shrink: 0;
}

.workspace {
  flex: 1;
  min-height: 0;
  display: flex;
  background: #f0f0f0;
}

.palette {
  width: 30px;
  flex-shrink: 0;
  border-right: 1px solid #a0a0a0;
}

.stack {
  position: relative;
  display: flex;
  flex-direction: column;
  align-items: center;
  padding: 10px 0 1px;
  border-bottom: 1px solid #a0a0a0;
}

.stack.open {
  border-bottom: none;
}

.rule {
  width: 22px;
  height: 1px;
  margin: 2px 0 5px;
  background: #808080;
}

.label {
  font-family: "Liberation Serif", serif;
  font-size: 8px;
  fill: #222;
}

.letter {
  font-family: "Liberation Sans", sans-serif;
  font-size: 14px;
  font-weight: bold;
  fill: #111;
}

.letter.blue { fill: #1c86e8; }

.letter.green { fill: #158019; }

.canvas {
  position: relative;
  flex: 1;
  min-width: 0;
  margin-top: 1px;
  overflow: hidden;
  background: #fff;
  border-top: 1px solid #555;
  border-left: 2px solid #696969;
}

.beam {
  position: absolute;
  top: 60px;
  right: 0;
  width: 120px;
  height: 104px;
}
```
